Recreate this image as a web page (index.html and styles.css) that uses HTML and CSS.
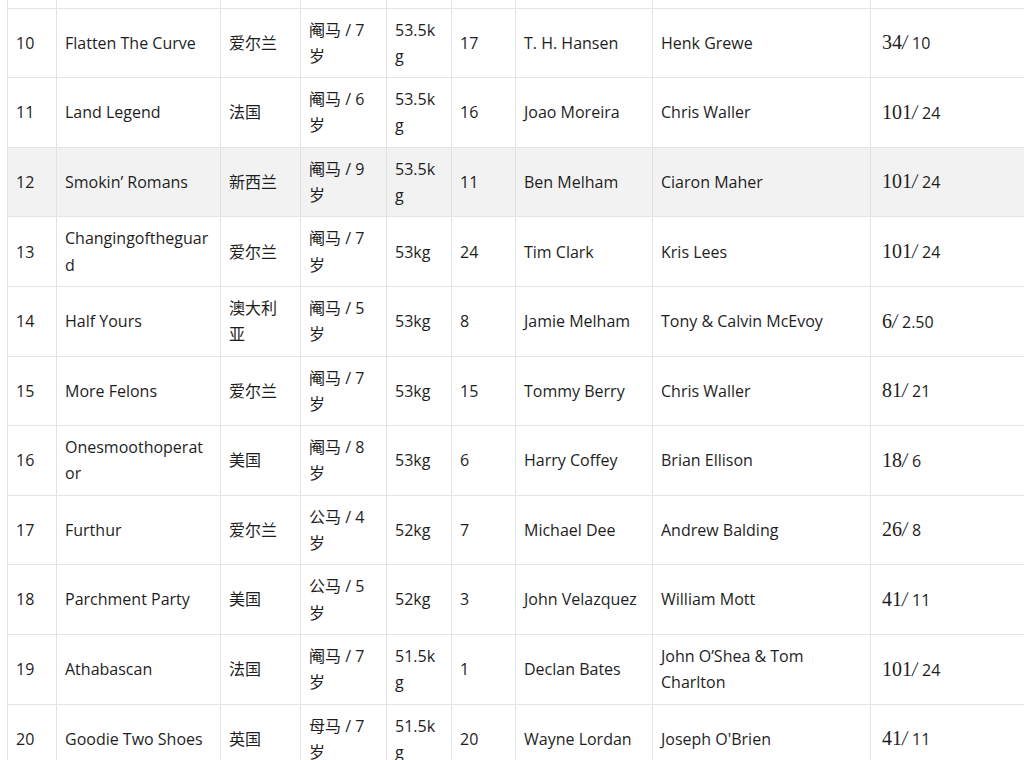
FILE: index.html
```html
<!DOCTYPE html>
<html lang="zh">
<head>
<meta charset="utf-8">
<title>Runners</title>
<link rel="stylesheet" href="styles.css">
</head>
<body>
<div class="wrap">
<table class="runners">
<colgroup>
<col class="c-no"><col class="c-name"><col class="c-country"><col class="c-sex"><col class="c-wt"><col class="c-draw"><col class="c-jockey"><col class="c-trainer"><col class="c-odds">
</colgroup>
<tbody>
<tr class="stub"><td>&nbsp;<br>&nbsp;</td><td></td><td></td><td></td><td></td><td></td><td></td><td></td><td></td></tr>
<tr><td>10</td><td>Flatten The Curve</td><td>爱尔兰</td><td>阉马 / 7 岁</td><td>53.5kg</td><td>17</td><td>T. H. Hansen</td><td>Henk Grewe</td><td class="odds"><span class="n">34</span><span class="s">/</span> <span class="d">10</span></td></tr>
<tr><td>11</td><td>Land Legend</td><td>法国</td><td>阉马 / 6 岁</td><td>53.5kg</td><td>16</td><td>Joao Moreira</td><td>Chris Waller</td><td class="odds"><span class="n">101</span><span class="s">/</span> <span class="d">24</span></td></tr>
<tr class="alt"><td>12</td><td>Smokin’ Romans</td><td>新西兰</td><td>阉马 / 9 岁</td><td>53.5kg</td><td>11</td><td>Ben Melham</td><td>Ciaron Maher</td><td class="odds"><span class="n">101</span><span class="s">/</span> <span class="d">24</span></td></tr>
<tr><td>13</td><td>Changingoftheguard</td><td>爱尔兰</td><td>阉马 / 7 岁</td><td>53kg</td><td>24</td><td>Tim Clark</td><td>Kris Lees</td><td class="odds"><span class="n">101</span><span class="s">/</span> <span class="d">24</span></td></tr>
<tr><td>14</td><td>Half Yours</td><td>澳大利亚</td><td>阉马 / 5 岁</td><td>53kg</td><td>8</td><td>Jamie Melham</td><td>Tony &amp; Calvin McEvoy</td><td class="odds"><span class="n">6</span><span class="s">/</span> <span class="d">2.50</span></td></tr>
<tr><td>15</td><td>More Felons</td><td>爱尔兰</td><td>阉马 / 7 岁</td><td>53kg</td><td>15</td><td>Tommy Berry</td><td>Chris Waller</td><td class="odds"><span class="n">81</span><span class="s">/</span> <span class="d">21</span></td></tr>
<tr><td>16</td><td>Onesmoothoperator</td><td>美国</td><td>阉马 / 8 岁</td><td>53kg</td><td>6</td><td>Harry Coffey</td><td>Brian Ellison</td><td class="odds"><span class="n">18</span><span class="s">/</span> <span class="d">6</span></td></tr>
<tr><td>17</td><td>Furthur</td><td>爱尔兰</td><td>公马 / 4 岁</td><td>52kg</td><td>7</td><td>Michael Dee</td><td>Andrew Balding</td><td class="odds"><span class="n">26</span><span class="s">/</span> <span class="d">8</span></td></tr>
<tr><td>18</td><td>Parchment Party</td><td>美国</td><td>公马 / 5 岁</td><td>52kg</td><td>3</td><td>John Velazquez</td><td>William Mott</td><td class="odds"><span class="n">41</span><span class="s">/</span> <span class="d">11</span></td></tr>
<tr><td>19</td><td>Athabascan</td><td>法国</td><td>阉马 / 7 岁</td><td>51.5kg</td><td>1</td><td>Declan Bates</td><td>John O’Shea &amp; Tom Charlton</td><td class="odds"><span class="n">101</span><span class="s">/</span> <span class="d">24</span></td></tr>
<tr><td>20</td><td>Goodie Two Shoes</td><td>英国</td><td>母马 / 7 岁</td><td>51.5kg</td><td>20</td><td>Wayne Lordan</td><td>Joseph O'Brien</td><td class="odds"><span class="n">41</span><span class="s">/</span> <span class="d">11</span></td></tr>
</tbody>
</table>
</div>
</body>
</html>
```
FILE: styles.css
```css
html, body {
  overflow: hidden;
}
body {
  margin: 0 0 0 7px;
  background: #fff;
  color: #1e1e1e;
  font-family: "Open Sans", "Noto Sans CJK SC", sans-serif;
  font-size: 16px;
}
.wrap {
  margin-top: -62px;
}
.runners {
  border-collapse: collapse;
  table-layout: fixed;
  width: 1080px;
}
.c-no { width: 49px; }
.c-name { width: 164px; }
.c-country { width: 80px; }
.c-sex { width: 86px; }
.c-wt { width: 65px; }
.c-draw { width: 64px; }
.c-jockey { width: 137px; }
.c-trainer { width: 218px; }
.c-odds { width: 217px; }
.runners td {
  border: 1px solid #e3e3e3;
  padding: 8px;
  line-height: 26.3px;
  vertical-align: middle;
  overflow-wrap: anywhere;
}
.runners tr.alt td {
  background: #f2f2f2;
}
.runners td.odds {
  padding-left: 11px;
}
.odds .n {
  font-family: "Liberation Serif", "DejaVu Serif", serif;
  font-size: 20px;
}
.odds .s {
  font-family: "Liberation Serif", serif;
  font-size: 21px;
  display: inline-block;
  transform: skewX(-6deg);
}
.odds .d {
  font-size: 16px;
}
```
